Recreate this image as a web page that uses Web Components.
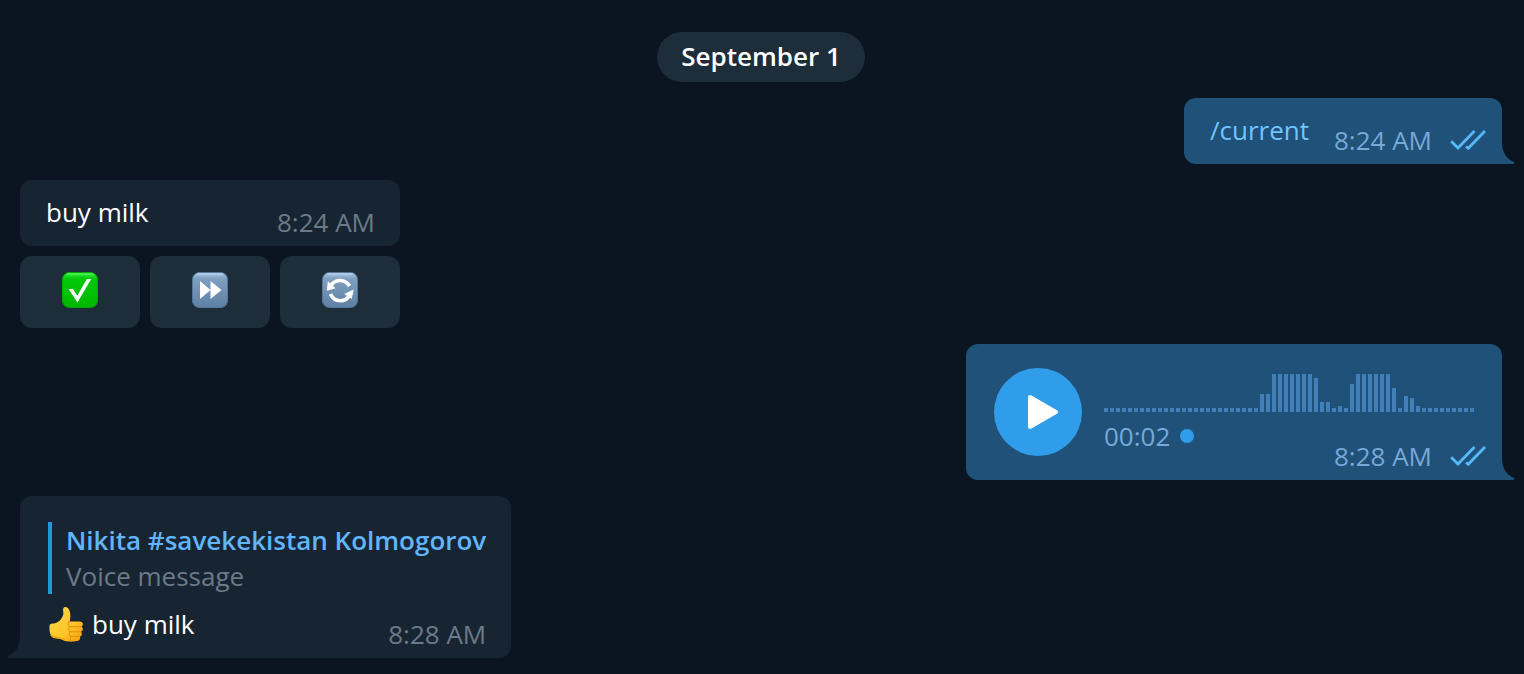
<!DOCTYPE html>
<html lang="en">
<head>
<meta charset="utf-8">
<meta name="viewport" content="width=device-width, initial-scale=1">
<title>Chat</title>
<style>
  :root {
    --bg: #0b1521;
    --in: #172533;
    --out: #1f5179;
    --key: #1d2d3a;
    --text: #fff;
    --muted: #6b7a88;
    --out-muted: #78a8d8;
    --tick: #55b9fc;
    --link: #70c5ff;
    --name: #62b4fb;
    --accent: #2f9dea;
    --bar: #1c9bdb;
    --wave: #407fb8;
  }
  body {
    margin: 0;
    background: var(--bg);
    color: var(--text);
    font: 26px/36px "Open Sans", sans-serif;
  }
</style>
</head>
<body>
<chat-log>
  <chat-date>September 1</chat-date>
  <chat-message out tail time="8:24 AM"><chat-command>/current</chat-command></chat-message>
  <chat-group>
    <chat-message time="8:24 AM">buy milk</chat-message>
    <chat-key slot="keys" icon="check" label="Done"></chat-key>
    <chat-key slot="keys" icon="forward" label="Skip"></chat-key>
    <chat-key slot="keys" icon="refresh" label="Refresh"></chat-key>
  </chat-group>
  <voice-message duration="00:02" time="8:28 AM"
    levels="4 4 4 4 4 4 4 4 4 4 4 4 4 4 4 4 4 4 4 4 4 4 4 4 4 4 18 18 38 38 38 38 38 38 38 34 10 10 4 6 4 28 38 38 38 38 38 38 24 4 16 14 6 4 4 4 4 4 4 4 4 4"></voice-message>
  <chat-message tail quoted time="8:28 AM">
    <chat-reply slot="reply"><span slot="name">Nikita #savekekistan Kolmogorov</span>Voice message</chat-reply>
    <thumb-emoji></thumb-emoji>buy milk
  </chat-message>
</chat-log>

<script>
  const define = (name, render) => customElements.define(name, class extends HTMLElement {
    connectedCallback() {
      if (this.shadowRoot) return;
      this.attachShadow({ mode: 'open' }).innerHTML = render(this);
    }
  });

  const tail = `<svg class="tail" width="12" height="22" viewBox="0 0 12 22" aria-hidden="true">
    <path d="M0 0C0 11 5 17 12 20V22H0Z" fill="currentColor"/></svg>`;

  const bubbleStyle = `
    .bubble { position: relative; box-sizing: border-box; border-radius: 12px; background: var(--fill); }
    .tail { position: absolute; bottom: 0; color: var(--fill); }
    .out .tail { left: 100%; }
    .in .tail { right: 100%; transform: scaleX(-1); }
    .out.tailed { border-bottom-right-radius: 0; }
    .in.tailed { border-bottom-left-radius: 0; }
    .out { --fill: var(--out); }
    .in { --fill: var(--in); }`;

  define('chat-log', () => `
    <style>
      :host { display: flex; flex-direction: column; align-items: flex-start; gap: 16px; padding: 32px 22px 16px 20px; }
      ::slotted(chat-date) { align-self: center; }
      ::slotted([out]), ::slotted(voice-message) { align-self: flex-end; }
    </style><slot></slot>`);

  define('chat-date', () => `
    <style>
      :host { display: block; padding: 6px 24px 8px; border-radius: 25px; background: var(--key); font-weight: 600; }
    </style><slot></slot>`);

  define('chat-command', () => `
    <style>
      :host { display: inline; }
      a { color: var(--link); text-decoration: none; }
    </style><a href="#current"><slot></slot></a>`);

  define('message-meta', el => `
    <style>
      :host { display: flex; align-items: center; gap: 18px; white-space: nowrap; color: var(--muted); }
      :host([out]) { color: var(--out-muted); }
      svg { color: var(--tick); }
    </style>
    <time><slot></slot></time>
    ${el.hasAttribute('out') ? `<svg width="36" height="22" viewBox="0 0 36 22" role="img" aria-label="Read">
      <path d="M1.2 12.2 8 19 24.5 2M16 17.5l2.2 1.8L35 2" fill="none" stroke="currentColor" stroke-width="2.8"/></svg>` : ''}`);

  define('chat-message', el => {
    const out = el.hasAttribute('out');
    return `
    <style>
      :host { display: block; }
      ${bubbleStyle}
      .bubble { padding: 14px 25px 6px 26px; }
      .bubble.out { padding-right: 16px; }
      .bubble.quoted { padding: 26px 25px 6px 28px; }
      .row { display: flex; justify-content: space-between; align-items: flex-end; gap: 25px; }
      .text { padding-bottom: 10px; }
      .quoted .row { margin-top: 12px; }
    </style>
    <div class="bubble ${out ? 'out' : 'in'} ${el.hasAttribute('tail') ? 'tailed' : ''} ${el.hasAttribute('quoted') ? 'quoted' : ''}">
      <slot name="reply"></slot>
      <div class="row">
        <div class="text"><slot></slot></div>
        <message-meta ${out ? 'out' : ''}>${el.getAttribute('time')}</message-meta>
      </div>
      ${el.hasAttribute('tail') ? tail : ''}
    </div>`;
  });

  define('chat-reply', () => `
    <style>
      :host { display: block; padding-left: 14px; border-left: 4px solid var(--bar); color: var(--muted); }
      .name { color: var(--name); font-weight: 600; }
    </style>
    <div class="name"><slot name="name"></slot></div>
    <div><slot></slot></div>`);

  define('chat-group', () => `
    <style>
      :host { display: grid; gap: 10px; }
      .keys { display: grid; grid-template-columns: repeat(3, 120px); gap: 10px; }
    </style>
    <slot></slot>
    <div class="keys"><slot name="keys"></slot></div>`);

  const icons = {
    check: `<path d="M6.500 17h4.500l4.300 6.800L24.800 7h4.400L15.500 30.500Z" fill="#fff"/>`,
    forward: `<path d="M8 9l10.500 9L8 27ZM18.500 9l11 9-11 9Z" fill="#fff"/>`,
    refresh: `<g fill="none" stroke="#fff" stroke-width="3.600">
        <path d="M8.500 14.500C12 7 23 6 27.500 14.200"/><path d="M8.500 22C12.500 31 24 31 27.500 22.500"/></g>
        <path d="M4.800 18.700l1-9.500 2.300 2 5.500 5ZM31.700 17.500l-9.500 4.500 2.600 1.800 5 3Z" fill="#fff"/>`
  };

  define('chat-key', el => {
    const kind = el.getAttribute('icon');
    const [top, mid, low, edge] = kind === 'check'
      ? ['#43ef4b', '#00c90a', '#00b700', '#00a500']
      : ['#acc9e7', '#7f9fc0', '#5d80a3', '#557799'];
    return `
    <style>
      :host { display: block; }
      button { display: flex; justify-content: center; width: 100%; height: 72px; padding: 16px 0 0; border: 0; border-radius: 12px; background: var(--key); cursor: pointer; }
    </style>
    <button type="button" aria-label="${el.getAttribute('label')}">
      <svg width="36" height="36" viewBox="0 0 36 36" aria-hidden="true">
        <defs><linearGradient id="g" x2="0" y2="1">
          <stop stop-color="${top}"/><stop offset=".18" stop-color="${mid}"/><stop offset="1" stop-color="${low}"/>
        </linearGradient></defs>
        <rect x=".5" y=".5" width="35" height="35" rx="7" fill="url(#g)" stroke="${edge}"/>
        <path d="M6 2H30" stroke="${top}" stroke-width="2" stroke-linecap="round"/>
        ${icons[kind]}
      </svg>
    </button>`;
  });

  define('thumb-emoji', () => `
    <style>
      :host { display: inline-block; width: 36px; height: 36px; margin-right: 8px; vertical-align: top; }
      svg { display: block; }
    </style>
    <svg width="36" height="36" viewBox="0 0 36 36" role="img" aria-label="Thumbs up">
      <defs>
        <linearGradient id="y" x2="1" y2="1"><stop stop-color="#ffd94a"/><stop offset=".6" stop-color="#ffc526"/><stop offset="1" stop-color="#f49b0b"/></linearGradient>
      </defs>
      <path d="M1.500 20C1.500 17.500 4 17.600 7 17.200C11 16.500 14.500 12 15.300 8.500C15.700 6 14.500 3.800 15.300 2.200C16.300.400 19.400.900 20.800 3.200C23 7 22.400 12 21.800 15.400H31.500C35.600 15.400 35.900 19.800 33 20.600C35.700 21.700 35.400 25 32.700 25.700C34.700 27 34.200 30 31.700 30.500C33 32.300 31.800 34.800 29 35C24 35.800 19.500 36 15.500 34.200C12.500 32.800 10.500 32.500 7 32.300C2.500 32 1.200 26 1.500 20Z" fill="url(#y)"/>
      <path d="M21 15.400C19.500 17.400 20 20 22 20.600H33M22 20.600C20 22 20.200 25 22.500 25.700H32.700M22.500 25.700C20.700 27.200 21 30 23 30.500H31.700M23 30.500C21.800 31.800 22 33.500 23.500 35.200" fill="none" stroke="#e69412" stroke-width="1.100" stroke-linecap="round"/>
      <path d="M3 29C6 32.500 12 31 17 34" fill="none" stroke="#f3a313" stroke-width="1.500"/>
    </svg>`);

  define('voice-message', el => {
    const levels = el.getAttribute('levels').split(' ').map(Number);
    const bars = levels.map((h, i) => `<rect x="${i * 6}" y="${38 - h}" width="4" height="${h}"/>`).join('');
    const width = levels.length * 6 - 2;
    return `
    <style>
      :host { display: block; }
      ${bubbleStyle}
      .bubble { display: flex; gap: 22px; padding: 24px 16px 6px 28px; }
      button { flex: none; width: 88px; height: 88px; padding: 0; border: 0; border-radius: 50%; background: var(--accent); cursor: pointer; }
      button svg { display: block; }
      .wave { display: block; margin: 6px 12px 6px 0; fill: var(--wave); }
      .row { display: flex; justify-content: space-between; height: 56px; }
      .duration { display: flex; align-items: center; gap: 10px; height: 36px; color: var(--out-muted); }
      .unplayed { width: 14px; height: 14px; border-radius: 50%; background: var(--accent); }
      message-meta { align-self: flex-end; }
    </style>
    <div class="bubble out tailed">
      <button type="button" aria-label="Play voice message">
        <svg width="88" height="88" viewBox="0 0 88 88" aria-hidden="true">
          <path d="M36 29 62 44 36 59Z" fill="#fff" stroke="#fff" stroke-width="4" stroke-linejoin="round"/></svg>
      </button>
      <div>
        <svg class="wave" width="${width}" height="38" viewBox="0 0 ${width} 38" aria-hidden="true">${bars}</svg>
        <div class="row">
          <div class="duration">${el.getAttribute('duration')}<span class="unplayed"></span></div>
          <message-meta out>${el.getAttribute('time')}</message-meta>
        </div>
      </div>
      ${tail}
    </div>`;
  });
</script>
</body>
</html>
